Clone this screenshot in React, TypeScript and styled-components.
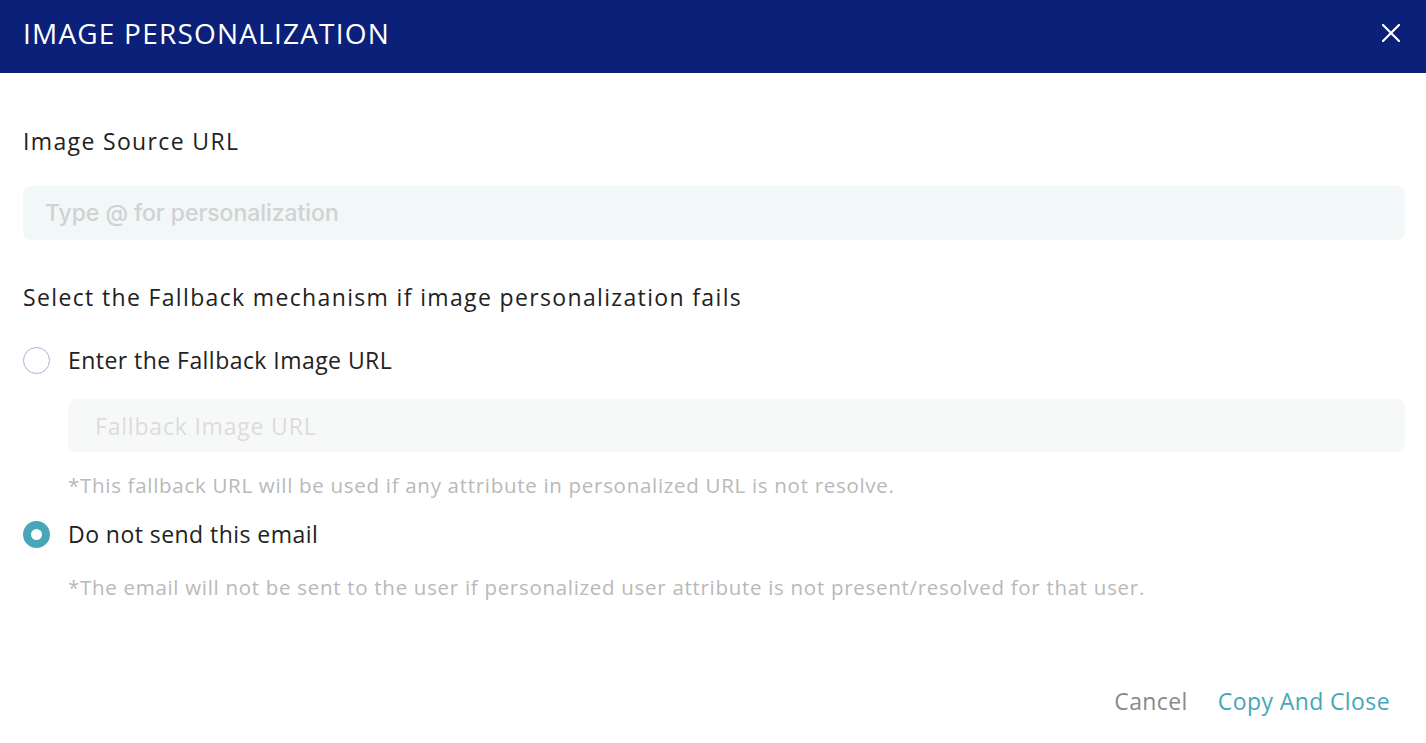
import React from "react";
import styled, { createGlobalStyle } from "styled-components";

const Global = createGlobalStyle`
  html, body { margin: 0; padding: 0; background: #fff; }
  body { font-family: "Open Sans", "Noto Sans", sans-serif; }
  * { box-sizing: border-box; }
`;

const Dialog = styled.div`
  width: 1426px;
  height: 743px;
  display: flex;
  flex-direction: column;
  background: #fff;
`;

const Header = styled.header`
  height: 73px;
  background: #0b2079;
  display: flex;
  align-items: center;
  justify-content: space-between;
  padding: 0 25px 8px 23px;
`;

const Title = styled.h1`
  margin: 0;
  font-size: 28px;
  font-weight: 400;
  letter-spacing: 1.2px;
  color: #fff;
`;

const CloseButton = styled.button`
  border: none;
  background: none;
  padding: 0;
  width: 20px;
  height: 20px;
  display: flex;
  align-items: center;
  justify-content: center;
  cursor: pointer;
`;

const Body = styled.main`
  flex: 1;
  display: flex;
  flex-direction: column;
  padding: 0 21px 0 23px;
`;

const Label = styled.div<{ $top: number }>`
  margin-top: ${(p) => p.$top}px;
  font-size: 23px;
  letter-spacing: 1.35px;
  line-height: 30px;
  color: #222;
`;

const Field = styled.input<{ $indent?: boolean; $soft?: boolean }>`
  margin-top: ${(p) => (p.$indent ? 24 : 30)}px;
  margin-left: ${(p) => (p.$indent ? 45 : 0)}px;
  height: ${(p) => (p.$indent ? 53 : 54)}px;
  border: none;
  outline: none;
  border-radius: 8px;
  background: ${(p) => (p.$soft ? "#f7f9f9" : "#f2f7f7")};
  padding: 0 ${(p) => (p.$indent ? 27 : 22)}px;
  font-family: ${(p) => (p.$indent ? '"Open Sans", sans-serif' : '"Inter", "Noto Sans", sans-serif')};
  font-size: ${(p) => (p.$indent ? 23 : 22.9)}px;
  letter-spacing: ${(p) => (p.$indent ? 0.8 : 0)}px;
  font-weight: ${(p) => (p.$indent ? 400 : 500)};
  &::placeholder {
    color: ${(p) => (p.$soft ? "#dcdcdc" : "#cfd3d3")};
  }
`;

const RadioRow = styled.label<{ $top: number }>`
  margin-top: ${(p) => p.$top}px;
  display: flex;
  align-items: center;
  gap: 18px;
  font-size: 23px;
  letter-spacing: 0.45px;
  line-height: 30px;
  color: #222;
  cursor: pointer;
`;

const RadioDot = styled.span<{ $checked?: boolean }>`
  width: 27px;
  height: 27px;
  border-radius: 50%;
  flex-shrink: 0;
  border: ${(p) => (p.$checked ? "8.5px solid #47a6b7" : "1px solid #a9b0cf")};
  background: #fff;
`;

const Note = styled.div<{ $top: number }>`
  margin-top: ${(p) => p.$top}px;
  margin-left: 45px;
  font-size: 20.5px;
  letter-spacing: 0.7px;
  line-height: 28px;
  color: #b9b9b9;
`;

const Footer = styled.footer`
  margin-top: auto;
  height: 71px;
  display: flex;
  align-items: flex-start;
  justify-content: flex-end;
  gap: 30px;
  padding: 14px 15px 0 0;
`;

const TextButton = styled.button<{ $primary?: boolean }>`
  border: none;
  background: none;
  padding: 0;
  font-family: "Open Sans", sans-serif;
  font-size: 23px;
  letter-spacing: 0.4px;
  line-height: 30px;
  color: ${(p) => (p.$primary ? "#47a6b7" : "#8a8a8a")};
  cursor: pointer;
`;

export default function App() {
  return (
    <>
      <Global />
      <Dialog>
        <Header>
          <Title>IMAGE PERSONALIZATION</Title>
          <CloseButton aria-label="Close">
            <svg width="18" height="18" viewBox="0 0 18 18">
              <path d="M1 1 L17 17 M17 1 L1 17" stroke="#fff" strokeWidth="2.2" strokeLinecap="square" />
            </svg>
          </CloseButton>
        </Header>
        <Body>
          <Label $top={53}>Image Source URL</Label>
          <Field placeholder="Type @ for personalization" />
          <Label $top={42}>Select the Fallback mechanism if image personalization fails</Label>
          <RadioRow $top={33}>
            <RadioDot />
            Enter the Fallback Image URL
          </RadioRow>
          <Field $indent $soft placeholder="Fallback Image URL" />
          <Note $top={19}>*This fallback URL will be used if any attribute in personalized URL is not resolve.</Note>
          <RadioRow $top={20}>
            <RadioDot $checked />
            Do not send this email
          </RadioRow>
          <Note $top={24}>*The email will not be sent to the user if personalized user attribute is not present/resolved for that user.</Note>
          <Footer>
            <TextButton>Cancel</TextButton>
            <TextButton $primary>Copy And Close</TextButton>
          </Footer>
        </Body>
      </Dialog>
    </>
  );
}
